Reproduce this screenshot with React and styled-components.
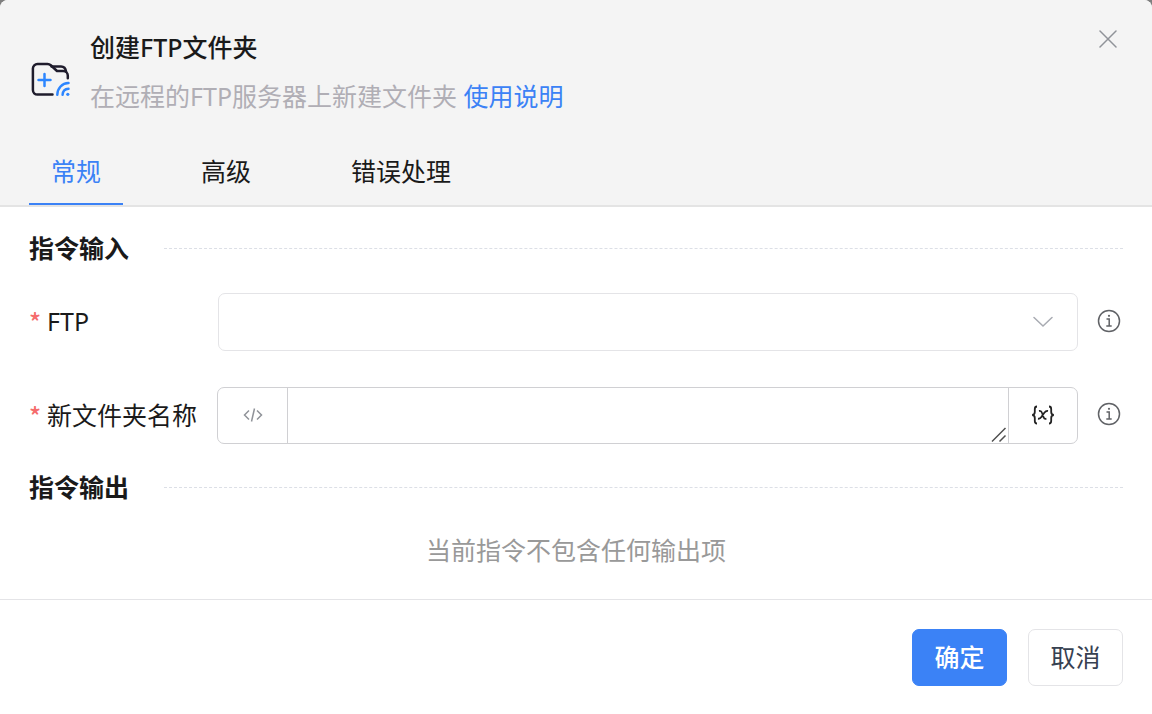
import React, { useState } from 'react'
import styled, { createGlobalStyle } from 'styled-components'

const tabs = ['常规', '高级', '错误处理']

function FolderIcon() {
  return (
    <svg width="42" height="42" viewBox="0 0 42 42" fill="none" strokeLinecap="round" strokeLinejoin="round" aria-hidden="true">
      <path d="M23.5 35.6H8.5a4.6 4.6 0 0 1-4.6-4.6V9.6A4.6 4.6 0 0 1 8.5 5h10c1.3 0 2.4.5 3.3 1.3L28 12h6.2a4.6 4.6 0 0 1 4.6 4.6v2.6" stroke="#1f1c2c" strokeWidth="2.5" />
      <path d="M22.5 7.5H32c2.8 0 4.6 1.6 5 5" stroke="#1f1c2c" strokeWidth="2.5" />
      <path d="M15.5 15v12M9.5 21h12" stroke="#2d86ff" strokeWidth="2.5" />
      <path d="M28.3 35.8c.2-6.600 4.700-11.600 11.200-11.800M33.600 35.800c.2-3.500 2.500-5.900 5.900-6.100" stroke="#2d86ff" strokeWidth="2.5" />
      <circle cx="38.8" cy="35.3" r="1.6" fill="#2d86ff" />
    </svg>
  )
}

function InfoIcon() {
  return (
    <svg width="24" height="24" viewBox="0 0 24 24" fill="none" stroke="#606266" strokeWidth="1.5" aria-hidden="true">
      <circle cx="12" cy="12" r="10.5" />
      <path d="M9.5 10h2.7v7M9.3 17.1h5.4" />
      <circle cx="12" cy="6.8" r="1.1" fill="#606266" stroke="none" />
    </svg>
  )
}

function App() {
  const [active, setActive] = useState(0)
  const [name, setName] = useState('')

  return (
    <Dialog role="dialog" aria-labelledby="title">
      <GlobalStyle />
      <Header>
        <Heading>
          <FolderIcon />
          <Titles>
            <Title id="title">创建FTP文件夹</Title>
            <Desc>在远程的FTP服务器上新建文件夹 <a href="#help">使用说明</a></Desc>
          </Titles>
          <CloseButton type="button" aria-label="关闭">
            <svg width="18" height="18" viewBox="0 0 18 18" stroke="#909399" strokeWidth="1.5" strokeLinecap="round">
              <path d="M1 1l16 16M17 1L1 17" />
            </svg>
          </CloseButton>
        </Heading>
        <Tabs role="tablist">
          {tabs.map((tab, i) => (
            <Tab key={tab} type="button" role="tab" aria-selected={i === active} $active={i === active} onClick={() => setActive(i)}>
              {tab}
            </Tab>
          ))}
        </Tabs>
      </Header>

      <Content>
        <SectionTitle>指令输入</SectionTitle>
        <Field>
          <Label htmlFor="ftp"><Star>*</Star>FTP</Label>
          <SelectBox>
            <Select id="ftp" defaultValue="">
              <option value=""></option>
            </Select>
            <Arrow width="20" height="12" viewBox="0 0 20 12" fill="none" stroke="#a8abb2" strokeWidth="1.5" strokeLinecap="round">
              <path d="M1 1.5l9 8.5 9-8.5" />
            </Arrow>
          </SelectBox>
          <InfoIcon />
        </Field>
        <Field>
          <Label htmlFor="name"><Star>*</Star>新文件夹名称</Label>
          <InputGroup>
            <GroupButton type="button" aria-label="代码">
              <svg width="20" height="16" viewBox="0 0 20 16" fill="none" stroke="#909399" strokeWidth="1.5">
                <path d="M6 3.5L1.5 8 6 12.5M14 3.5L18.5 8 14 12.5M11.5 1.5l-3 13" />
              </svg>
            </GroupButton>
            <TextWrap>
              <TextArea id="name" rows="1" value={name} onChange={e => setName(e.target.value)} />
              <Grip width="16" height="16" viewBox="0 0 16 16" stroke="#505050" strokeWidth="1.5">
                <path d="M1 14.5L14.5 1M8.5 14.5l6-6" />
              </Grip>
            </TextWrap>
            <GroupButton type="button" aria-label="变量">
              <svg width="24" height="20" viewBox="0 0 24 20" fill="none" stroke="#222" strokeWidth="1.8">
                <path d="M6 1.5C3.8 1.5 3.8 2.6 3.8 4v3c0 1.7-.7 2.8-2.6 3 1.9.2 2.6 1.3 2.6 3v3c0 1.4 0 2.5 2.2 2.5" />
                <path d="M18 1.5c2.2 0 2.2 1.1 2.2 2.5v3c0 1.7.7 2.8 2.6 3-1.9.2-2.6 1.3-2.6 3v3c0 1.4 0 2.5-2.2 2.5" />
                <path d="M8 6c1.8-.4 2.5.3 3 1.8l1.600 4.400c.5 1.500 1.200 2 2.800 1.500M17 6c-1.400-.3-2.600.4-3.700 1.800L10.400 12c-1 1.400-1.900 2-3.400 1.700" />
              </svg>
            </GroupButton>
          </InputGroup>
          <InfoIcon />
        </Field>
        <SectionTitle>指令输出</SectionTitle>
        <Empty>当前指令不包含任何输出项</Empty>
      </Content>

      <Footer>
        <Button type="button" $primary>确定</Button>
        <Button type="button">取消</Button>
      </Footer>
    </Dialog>
  )
}

const GlobalStyle = createGlobalStyle`
  *{
    box-sizing: border-box;
  }

  body{
    margin: 0;
    background: #7f7f7f;
    color: #1a1a1a;
    font-family: 'Noto Sans', 'Noto Sans CJK SC', sans-serif;
    font-size: 25px;
    line-height: 36px;
  }

  button, select, textarea{
    font: inherit;
    color: inherit;
  }

  button{
    cursor: pointer;
  }
`

const Dialog = styled.div`
  display: flex;
  flex-direction: column;
  min-height: 100vh;
  background: #fff;
  border-radius: 8px 8px 0 0;
  overflow: hidden;
`

const Header = styled.header`
  background: #f4f4f4;
  border-bottom: 2px solid #e4e4e4;
`

const Heading = styled.div`
  display: flex;
  align-items: center;
  padding: 29px 33px 0 29px;

  > svg{
    margin-top: 17px;
  }
`

const Titles = styled.div`
  flex: 1;
  margin-left: 19px;
`

const Title = styled.h1`
  margin: 0 0 13px;
  font-size: 25px;
  font-weight: 500;
`

const Desc = styled.p`
  margin: 0;
  color: #b0aeb5;

  a{
    color: #3b82f6;
    text-decoration: none;
  }
`

const CloseButton = styled.button`
  display: flex;
  align-self: flex-start;
  padding: 0;
  border: 0;
  background: none;
  margin: 1px 2px 0;
`

const Tabs = styled.div`
  display: flex;
  gap: 56px;
  padding: 24px 29px 0;
`

const Tab = styled.button`
  height: 67px;
  padding: 0 22px;
  border: 0;
  border-bottom: 2px solid ${props => (props.$active ? '#3b82f6' : 'transparent')};
  background: none;
  color: ${props => (props.$active ? '#3b82f6' : '#1a1a1a')};
`

const Content = styled.main`
  flex: 1;
  padding: 23px 29px 30px;
`

const SectionTitle = styled.h2`
  display: flex;
  align-items: center;
  gap: 35px;
  margin: 0;
  font-size: 25px;
  font-weight: 700;

  &::after{
    content: '';
    flex: 1;
    border-top: 1px dashed #dcdfe6;
  }
`

const Field = styled.div`
  display: flex;
  align-items: center;
  margin: 27px 0 36px;

  & + &{
    margin-bottom: 25px;
  }

  > svg{
    margin: 0 2px 3px 19px;
  }
`

const Label = styled.label`
  display: flex;
  width: 189px;
  padding-bottom: 2px;
`

const Star = styled.span`
  width: 18px;
  color: #f56c6c;
  font-family: 'Noto Sans CJK SC', sans-serif;
  font-weight: 500;
`

const SelectBox = styled.div`
  position: relative;
  flex: 1;
`

const Select = styled.select`
  display: block;
  width: 100%;
  height: 58px;
  padding: 0 60px 0 20px;
  border: 1px solid #e4e4e7;
  border-radius: 7px;
  background: #fff;
  appearance: none;
`

const Arrow = styled.svg`
  position: absolute;
  top: 23px;
  right: 25px;
  pointer-events: none;
`

const InputGroup = styled.div`
  display: flex;
  flex: 1;
  height: 57px;
  margin-left: -1px;
  border: 1px solid #d0d0d3;
  border-radius: 7px;
`

const GroupButton = styled.button`
  display: flex;
  align-items: center;
  justify-content: center;
  width: 69px;
  padding: 0 0 2px;
  border: 0;
  background: none;

  &:last-child{
    width: 68px;
  }
`

const TextWrap = styled.div`
  position: relative;
  flex: 1;
  border: solid #d0d0d3;
  border-width: 0 1px;
`

const TextArea = styled.textarea`
  display: block;
  width: 100%;
  height: 55px;
  padding: 9px 20px;
  border: 0;
  background: none;
  resize: none;
`

const Grip = styled.svg`
  position: absolute;
  right: 1px;
  bottom: 0;
  pointer-events: none;
`

const Empty = styled.p`
  margin: 27px 0 0;
  color: #999;
  text-align: center;
`

const Footer = styled.footer`
  display: flex;
  justify-content: flex-end;
  gap: 21px;
  padding: 29px 29px 28px;
  border-top: 1px solid #e4e4e7;
`

const Button = styled.button`
  width: 95px;
  height: 57px;
  padding: 0 0 2px;
  border: 1px solid ${props => (props.$primary ? '#3b82f6' : '#e4e4e7')};
  border-radius: 7px;
  background: ${props => (props.$primary ? '#3b82f6' : '#fff')};
  color: ${props => (props.$primary ? '#fff' : '#374151')};
  font-weight: ${props => (props.$primary ? 500 : 400)};
`

export default App
